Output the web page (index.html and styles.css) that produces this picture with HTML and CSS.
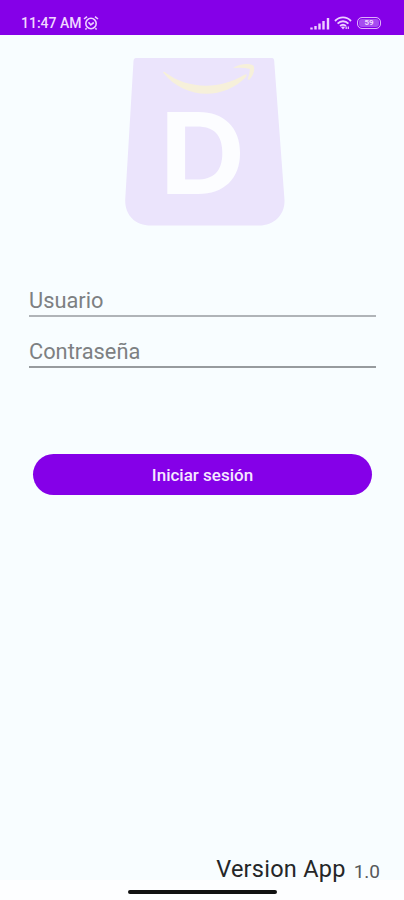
FILE: index.html
```html
<!DOCTYPE html>
<html lang="es">
  <head>
    <meta charset="utf-8" />
    <meta name="viewport" content="width=device-width, initial-scale=1" />
    <title>Iniciar sesión</title>
    <link rel="stylesheet" href="styles.css">
  </head>

  <body>
    <header class="status-bar">
      <span class="clock">11:47 AM</span>
      <svg class="alarm" viewBox="0 0 16 16">
        <circle cx="8" cy="8.5" r="5.2" />
        <path d="M1,4 4,1.6 M15,4 12,1.6 M3.6,13.2 2.4,14.5 M12.4,13.2 13.6,14.5" />
        <path d="M5.5,7.3 7.8,9.8 10.8,7.5" />
      </svg>
      <div class="indicators">
        <svg class="signal" viewBox="0 0 20 13">
          <path d="M1.5,10.5V12.5 M5.5,9V12.5 M9.5,6.5V12.5 M13.5,4V12.5 M18,1V12.5" />
        </svg>
        <svg class="wifi" viewBox="0 0 18 14">
          <path d="M1,5C5.5,.2 12.5,.2 17,5 M3.6,7.6C6.7,4.5 11.3,4.5 14.4,7.6 M6.1,10C7.8,8.4 10.2,8.4 11.9,10" />
          <path class="solid" d="M7,11.1Q9,9.8 11,11.1L9,13.5Z" />
          <path class="traffic" d="M12.2,10.5V13 M14.3,10.5V13" />
        </svg>
        <div class="battery">59</div>
      </div>
    </header>

    <main class="login">
      <svg class="logo" viewBox="0 0 160 168">
        <path
          d="M11,0H147Q149,0 149.2,3L159.5,142C160,157 149,167.5 134,167.5H26C10,167.5 0,157 .2,142L8.5,3Q8.8,0 11,0Z"
          fill="#ebe4fc"
        />
        <g fill="#f6f0da">
          <path d="M38,14.5Q39,13 41,15C61,30 93,33 119,17Q123,15 121,19C99,42 60,42 38,14.5Z" />
          <path d="M108,10C115,5 129,5 129,9C130,14 127,19 124,22Q122,22 124,17L125,11Q118,9 108,10Z" />
        </g>
        <text class="logo-letter" x="34.5" y="136" textLength="86" lengthAdjust="spacingAndGlyphs">D</text>
      </svg>

      <form class="login-form">
        <input class="field" type="text" placeholder="Usuario" />
        <input class="field field-password" type="password" placeholder="Contraseña" />
        <button class="submit" type="button">Iniciar sesión</button>
      </form>

      <p class="version">
        <span class="version-label">Version App</span>
        <span class="version-number">1.0</span>
      </p>
    </main>

    <footer class="nav-bar">
      <div class="home-handle"></div>
    </footer>
  </body>
</html>
```

FILE: styles.css
```css
* {
  box-sizing: border-box;
}

body {
  display: flex;
  flex-direction: column;
  height: 100vh;
  margin: 0;
  overflow: hidden;
  background: #f8fdff;
  font-family: Roboto, sans-serif;
}

.status-bar {
  display: flex;
  align-items: center;
  height: 35px;
  padding: 11px 23px 0 21px;
  background: #8500e8;
  color: #f0d8ff;
}

.clock {
  width: 61px;
  font-size: 14px;
  font-weight: 500;
  white-space: nowrap;
}

.status-bar svg {
  fill: none;
  stroke: #edd0ff;
  stroke-width: 1.6;
}

.alarm {
  width: 16px;
  height: 16px;
  margin-left: 1px;
}

.indicators {
  display: flex;
  align-items: center;
  margin-left: auto;
}

.signal {
  width: 20px;
  height: 13px;
  margin-right: 4px;
}

.status-bar .signal {
  stroke-width: 2.4;
}

.status-bar .wifi {
  width: 18px;
  height: 14px;
  margin-right: 5px;
  stroke-width: 1.9;
}

.wifi .solid {
  fill: #edd0ff;
  stroke: none;
}

.wifi .traffic {
  stroke-width: 1.2;
}

.battery {
  width: 24px;
  height: 12px;
  border: 1.5px solid #dfb0fb;
  border-radius: 5px;
  box-shadow: inset 0 0 0 1px #8500e8;
  background: #a64cf0;
  font-size: 8px;
  font-weight: 700;
  line-height: 10px;
  text-align: center;
}

.login {
  display: flex;
  flex: 1;
  flex-direction: column;
  align-items: center;
  padding: 23px 24px 0 29px;
}

.logo {
  width: 160px;
  height: 168px;
}

.logo-letter {
  fill: #fcfdff;
  font-family: Inter, sans-serif;
  font-size: 113px;
  font-weight: 700;
}

.login-form {
  display: flex;
  flex-direction: column;
  width: 100%;
  padding-right: 4px;
  margin-top: 58px;
}

.field {
  height: 33px;
  padding: 1px 0 0;
  border: 0;
  border-bottom: 2px solid #b0b4b8;
  border-radius: 0;
  outline: 0;
  background: none;
  font-family: inherit;
  font-size: 21.8px;
}

.field::placeholder {
  color: #7d8082;
  opacity: 1;
}

.field-password {
  margin-top: 18px;
  border-color: #979b9e;
}

.submit {
  height: 41px;
  margin: 86px 4px 0;
  border: 0;
  border-radius: 21px;
  background: #8500e8;
  color: #f6e8ff;
  font-family: inherit;
  font-size: 17px;
  font-weight: 500;
}

.version {
  display: flex;
  align-items: flex-end;
  align-self: flex-end;
  margin: auto 0 -3px;
  color: #242628;
  /* the descenders reach into the nav bar */
  position: relative;
}

.version-label {
  font-size: 23.5px;
  letter-spacing: 0.25px;
  line-height: 28px;
}

.version-number {
  margin-left: 8px;
  color: #55585a;
  font-size: 19px;
  line-height: 22px;
}

.nav-bar {
  display: flex;
  justify-content: center;
  height: 20px;
  padding-top: 10px;
  background: #fdfeff;
}

.home-handle {
  width: 149px;
  height: 4px;
  border-radius: 2px;
  background: #111;
}
```
